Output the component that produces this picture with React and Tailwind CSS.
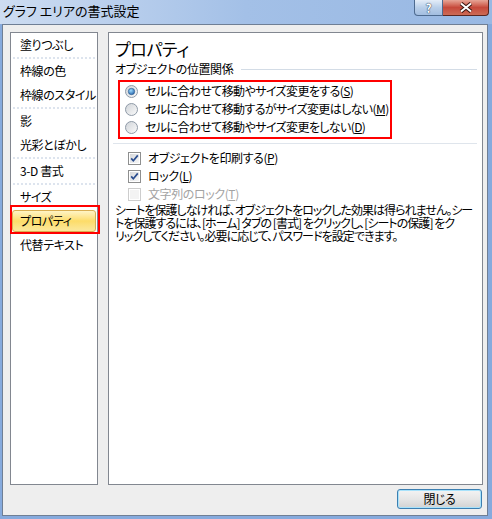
import React from 'react';

const items = [
  ['塗りつぶし'],
  ['枠線の色', '枠線のスタイル'],
  ['影', '光彩とぼかし'],
  ['3-D 書式'],
  ['サイズ', 'プロパティ', '代替テキスト'],
];

function Radio({ checked }) {
  return (
    <svg width="13" height="13" viewBox="0 0 13 13" className="shrink-0">
      <defs>
        <linearGradient id="radioBg" x1="0" y1="0" x2="1" y2="1">
          <stop offset="0" stopColor="#cfd3d8" />
          <stop offset="1" stopColor="#fbfbfb" />
        </linearGradient>
        <radialGradient id="radioDot" cx="0.4" cy="0.35" r="0.75">
          <stop offset="0" stopColor="#9fdcff" />
          <stop offset="1" stopColor="#1a5aa4" />
        </radialGradient>
      </defs>
      <circle cx="6.5" cy="6.5" r="6" fill="url(#radioBg)" stroke="#8f9aa7" />
      {checked && <circle cx="6.5" cy="6.5" r="3.2" fill="url(#radioDot)" stroke="#2c5788" strokeWidth="0.6" />}
    </svg>
  );
}

function Check({ checked, disabled }) {
  return (
    <svg width="13" height="13" viewBox="0 0 13 13" className="shrink-0">
      <defs>
        <linearGradient id="chkBg" x1="0" y1="0" x2="1" y2="1">
          <stop offset="0" stopColor="#d6d8db" />
          <stop offset="1" stopColor="#f7f7f7" />
        </linearGradient>
      </defs>
      <rect x="0.5" y="0.5" width="12" height="12" fill="#fff" stroke={disabled ? '#cdcdcd' : '#8e8f8f'} />
      <rect x="2" y="2" width="9" height="9" fill={disabled ? '#f3f3f3' : 'url(#chkBg)'} />
      {checked && <path d="M3.2 6.4 L5.3 8.8 L9.8 3.4" fill="none" stroke="#2a4d8f" strokeWidth="1.7" />}
    </svg>
  );
}

function Acc({ k }) {
  return <>(<span className="underline">{k}</span>)</>;
}

function ListItem({ label }) {
  if (label === 'プロパティ') {
    return (
      <div className="relative h-[24px] px-[1px] py-[1px]">
        <div className="h-full rounded-[3px] border border-[#d9ae52] bg-gradient-to-b from-[#fff4c4] via-[#fddc68] to-[#fbe89c] pl-[7px] flex items-center">
          {label}
        </div>
        <div className="absolute top-[-4px] bottom-[-1px] left-[-1px] right-[-3px] border-2 border-[#ff0000]" />
      </div>
    );
  }
  return <div className="h-[24px] pl-[9px] flex items-center whitespace-nowrap">{label}</div>;
}

export default function App() {
  return (
    <div
      className="w-[492px] h-[519px] flex flex-col bg-[#86aadd] overflow-hidden text-[12px] tracking-[-0.4px] text-black [font-feature-settings:'palt']"
      style={{ fontFamily: '"Noto Sans CJK JP", "Noto Sans", sans-serif' }}
    >
      {/* title bar */}
      <div className="h-[24px] flex justify-between bg-gradient-to-r from-[#cddcf1] via-[#a3c0e7] to-[#98b8e3]">
        <span className="pl-[3px] pt-[2px] text-[13px] leading-[18px] tracking-[0px]">グラフ エリアの書式設定</span>
        <div className="flex h-[16px] mr-[3px]">
          <div className="w-[29px] flex items-center justify-center rounded-bl-[4px] border border-t-0 border-[#4d6a8f] bg-gradient-to-b from-[#e4edf8] via-[#b9cfe9] to-[#a2bde0] text-white font-bold text-[12px] leading-[14px] [text-shadow:0_0_1px_#1c2f4a,0_0_1px_#1c2f4a]">
            ?
          </div>
          <div className="w-[46px] flex items-center justify-center rounded-br-[4px] border border-t-0 border-l-0 border-[#5a2620] bg-gradient-to-b from-[#e6a597] via-[#c6493b] to-[#cc6a55]">
            <svg width="14" height="11" viewBox="0 0 14 11">
              <path d="M2 1.5 L12 9.5 M12 1.5 L2 9.5" stroke="#3a1712" strokeWidth="4" />
              <path d="M2 1.5 L12 9.5 M12 1.5 L2 9.5" stroke="#ffffff" strokeWidth="2" />
            </svg>
          </div>
        </div>
      </div>

      {/* body */}
      <div className="flex-1 flex pl-[2px] pr-[4px] pb-[3px]">
        <div className="flex-1 flex flex-col border border-[#6f7f95] bg-[#eeeeee]">
          <div className="flex gap-[10px] pl-[7px] pt-[7px]">
            {/* left list */}
            <div className="w-[88px] h-[453px] border border-[#828790] bg-white">
              {items.map((group, gi) => (
                <div key={gi}>
                  {gi > 0 && <div className="h-[2px] mx-[2px] border-t-2 border-dotted border-[#dde4ee]" />}
                  {group.map((label) => (
                    <ListItem key={label} label={label} />
                  ))}
                </div>
              ))}
            </div>

            {/* right panel */}
            <div className="w-[375px] h-[453px] border border-[#828790] bg-white pl-[6px] pr-[5px] pt-[6px]">
              <div className="text-[17px] leading-[20px]">プロパティ</div>
              <div className="mt-[2px] h-[16px] flex items-center">
                <span>オブジェクトの位置関係</span>
                <div className="flex-1 h-px bg-[#d3dce6] ml-[8px]" />
              </div>
              <div className="mt-[3px] ml-[3px] w-[274px] border-2 border-[#ff0000] pl-[5px] pb-px">
                {[
                  ['セルに合わせて移動やサイズ変更をする', 'S', true],
                  ['セルに合わせて移動するがサイズ変更はしない', 'M', false],
                  ['セルに合わせて移動やサイズ変更をしない', 'D', false],
                ].map(([t, k, c]) => (
                  <div key={k} className="h-[18px] flex items-center gap-[7px] whitespace-nowrap tracking-[-0.6px]">
                    <Radio checked={c} />
                    <span>
                      {t}
                      <Acc k={k} />
                    </span>
                  </div>
                ))}
              </div>
              <div className="mt-[4px] -ml-[2px] h-px bg-[#dfe5ec]" />
              <div className="mt-[5px] pl-[13px]">
                <div className="h-[18px] flex items-center gap-[7px]">
                  <Check checked />
                  <span>
                    オブジェクトを印刷する<Acc k="P" />
                  </span>
                </div>
                <div className="h-[18px] flex items-center gap-[7px]">
                  <Check checked />
                  <span>
                    ロック<Acc k="L" />
                  </span>
                </div>
                <div className="h-[18px] flex items-center gap-[7px] text-[#a3a3a3]">
                  <Check disabled />
                  <span>
                    文字列のロック<Acc k="T" />
                  </span>
                </div>
              </div>
              <p className="leading-[13px] whitespace-nowrap tracking-[-0.95px]">
                シートを保護しなければ、オブジェクトをロックした効果は得られません。シー
                <br />
                トを保護するには、[ホーム] タブの [書式] をクリックし、[シートの保護] をク
                <br />
                リックしてください。必要に応じて、パスワードを設定できます。
              </p>
            </div>
          </div>

          {/* footer */}
          <div className="flex justify-end pr-[5px] mt-[4px]">
            <button className="w-[85px] h-[20px] rounded-[3px] border border-[#3c7fb1] shadow-[inset_0_0_0_1px_#a8e2fb] bg-gradient-to-b from-[#f3f3f3] via-[#e6e6e6] to-[#d2d2d2] text-[12px] leading-none">
              閉じる
            </button>
          </div>
        </div>
      </div>
    </div>
  );
}
